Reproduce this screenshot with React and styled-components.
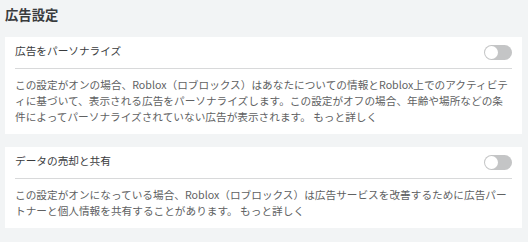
import React from 'react'
import styled, { createGlobalStyle } from 'styled-components'

const GlobalStyle = createGlobalStyle`
    body {
        margin: 0;
        background: #f2f4f5;
        font-family: 'Noto Sans CJK JP', 'Noto Sans', sans-serif;
    }
`

const settings = [
    {
        label: '広告をパーソナライズ',
        text: 'この設定がオンの場合、Roblox（ロブロックス）はあなたについての情報とRoblox上でのアクティビティに基づいて、表示される広告をパーソナライズします。この設定がオフの場合、年齢や場所などの条件によってパーソナライズされていない広告が表示されます。',
    },
    {
        label: 'データの売却と共有',
        text: 'この設定がオンになっている場合、Roblox（ロブロックス）は広告サービスを改善するために広告パートナーと個人情報を共有することがあります。',
    },
]

const App = () => {
    return (
        <Page>
            <GlobalStyle />
            <Title>広告設定</Title>
            <List>
                {settings.map((s) => (
                    <Card key={s.label}>
                        <Header>
                            <Label>{s.label}</Label>
                            <Toggle aria-label={s.label} />
                        </Header>
                        <Description>
                            {s.text} もっと詳しく
                        </Description>
                    </Card>
                ))}
            </List>
        </Page>
    )
}

export default App

const Page = styled.div`
    padding: 4px 6px 0 5px;
`

const Title = styled.h2`
    margin: 0;
    font-size: 13.33px;
    font-weight: 700;
    line-height: 22px;
    height: 33px;
    color: #393b3d;
`

const List = styled.div`
    display: flex;
    flex-direction: column;
    gap: 13px;
`

const Card = styled.div`
    background: #fff;
    padding: 0 10px 9px;
`

const Header = styled.div`
    display: flex;
    align-items: center;
    justify-content: space-between;
    height: 31px;
    border-bottom: 1px solid #d8d9da;
`

const Label = styled.span`
    font-size: 10.667px;
    color: #393b3d;
    margin-top: -4px;
`

const Toggle = styled.button`
    position: relative;
    width: 28px;
    height: 15px;
    border: 0;
    padding: 0;
    border-radius: 8px;
    background: #c4c5c6;
    cursor: pointer;

    &::after {
        content: '';
        position: absolute;
        top: 1px;
        left: 1px;
        width: 13px;
        height: 13px;
        border-radius: 50%;
        background: #fff;
    }
`

const Description = styled.p`
    margin: 8px 0 0;
    font-size: 10.667px;
    line-height: 16px;
    line-break: loose;
    color: #606162;
`
